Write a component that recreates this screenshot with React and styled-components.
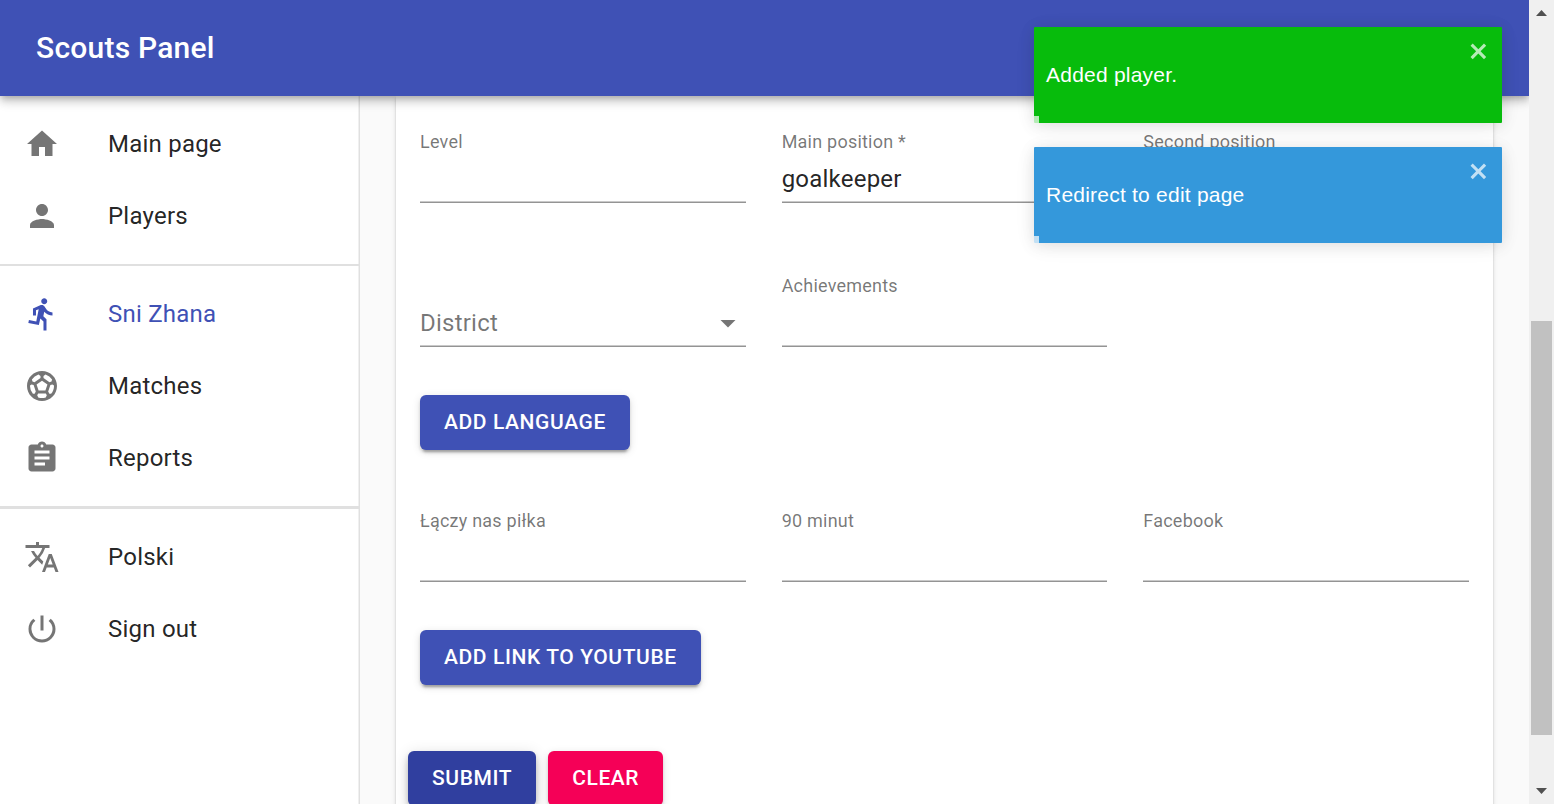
import React from "react";
import styled, { createGlobalStyle, css } from "styled-components";
import {
  MdHome,
  MdPerson,
  MdDirectionsRun,
  MdSportsSoccer,
  MdAssignment,
  MdTranslate,
  MdPowerSettingsNew,
  MdArrowDropDown,
} from "react-icons/md";

const GlobalStyle = createGlobalStyle`
  *, *::before, *::after { box-sizing: border-box; }
  body {
    margin: 0;
    background: #fafafa;
    color: rgba(0, 0, 0, 0.87);
    font-family: Roboto, "Liberation Sans", sans-serif;
    font-size: 24px;
    letter-spacing: 0.00938em;
  }
`;

const Window = styled.div`
  display: flex;
  height: 100vh;
  overflow: hidden;
`;

const Page = styled.div`
  position: relative;
  flex: 1;
  min-width: 0;
  display: flex;
  flex-direction: column;
  overflow: hidden;
`;

const AppBar = styled.header`
  position: relative;
  z-index: 2;
  flex: none;
  display: flex;
  align-items: center;
  height: 96px;
  padding: 0 36px;
  background: #3f51b5;
  color: #fff;
  box-shadow: 0 3px 6px -2px rgba(0, 0, 0, 0.2), 0 6px 8px 0 rgba(0, 0, 0, 0.14),
    0 2px 15px 0 rgba(0, 0, 0, 0.12);
`;

const Title = styled.h1`
  margin: 0;
  font-size: 30px;
  line-height: 48px;
  font-weight: 500;
  letter-spacing: 0.0075em;
`;

const Body = styled.div`
  flex: 1;
  min-height: 0;
  display: flex;
`;

const Drawer = styled.nav`
  flex: none;
  width: 360px;
  background: #fff;
  border-right: 1px solid #e0e0e0;
  box-shadow: inset -1px 0 #f0f0f0;
`;

const NavList = styled.ul`
  list-style: none;
  margin: 0;
  padding: 12px 0;
  ${(p) => p.$divider && css`border-bottom: ${p.$divider}px solid #e0e0e0;`}
`;

const NavLink = styled.a`
  display: flex;
  align-items: center;
  gap: 48px;
  height: 72px;
  padding: 0 24px;
  color: ${(p) => (p.$active ? "#3f51b5" : "inherit")};
  line-height: 36px;
  text-decoration: none;

  svg {
    flex: none;
    width: 36px;
    height: 36px;
    color: ${(p) => (p.$active ? "#3f51b5" : "rgba(0, 0, 0, 0.54)")};
  }
`;

const Content = styled.main`
  flex: 1;
  min-width: 0;
  padding: 0 36px;
  overflow: hidden;
`;

const Card = styled.form`
  min-height: 100%;
  padding: 35px 12px 24px;
  background: #fff;
  box-shadow: 0 3px 2px -2px rgba(0, 0, 0, 0.2), 0 2px 2px 0 rgba(0, 0, 0, 0.14),
    0 2px 5px 0 rgba(0, 0, 0, 0.12);
`;

const FieldGrid = styled.div`
  display: grid;
  grid-template-columns: repeat(3, 1fr);
  gap: 72px 36px;
  padding: 0 12px;
`;

const FieldBox = styled.div`
  display: flex;
  flex-direction: column;
  justify-content: flex-end;
  min-width: 0;
  height: 72px;
`;

const Label = styled.label`
  margin: 2px 0 4px;
  color: rgba(0, 0, 0, 0.54);
  font-size: 18px;
  line-height: 18px;
  white-space: nowrap;
`;

const control = css`
  display: block;
  width: 100%;
  height: 48px;
  margin: 0;
  padding: 10px 0 8px;
  border: 0;
  border-bottom: 1px solid #949494;
  border-radius: 0;
  box-shadow: inset 0 -1px #c9c9c9;
  background: transparent;
  color: inherit;
  font: inherit;
  line-height: 29px;
  letter-spacing: inherit;
  outline: 0;
`;

const TextInput = styled.input`
  ${control}
`;

const SelectWrap = styled.div`
  position: relative;

  svg {
    position: absolute;
    right: 0;
    top: 6px;
    width: 36px;
    height: 36px;
    color: rgba(0, 0, 0, 0.54);
    pointer-events: none;
  }
`;

const SelectInput = styled.select`
  ${control}
  appearance: none;
  color: ${(p) => (p.$empty ? "rgba(0, 0, 0, 0.54)" : "inherit")};
`;

const AddRow = styled.div`
  padding: ${(p) => p.$space};
`;

const Actions = styled.div`
  display: flex;
  gap: 12px;
`;

const tones = {
  primary: "#3f51b5",
  pressed: "#303f9f",
  secondary: "#f50057",
};

const Button = styled.button`
  height: 55px;
  padding: 0 24px;
  border: 0;
  border-radius: 6px;
  background: ${(p) => tones[p.$tone || "primary"]};
  color: #fff;
  font-family: inherit;
  font-size: 21px;
  font-weight: 500;
  line-height: 37px;
  letter-spacing: 0.02857em;
  text-transform: uppercase;
  box-shadow: ${(p) =>
    p.$tone === "pressed"
      ? "0 3px 6px -2px rgba(0,0,0,.2), 0 6px 8px 0 rgba(0,0,0,.14), 0 2px 15px 0 rgba(0,0,0,.12)"
      : "0 5px 2px -3px rgba(0,0,0,.2), 0 3px 3px 0 rgba(0,0,0,.14), 0 2px 8px 0 rgba(0,0,0,.12)"};
`;

const Toasts = styled.div`
  position: absolute;
  z-index: 3;
  top: 27px;
  right: 27px;
  width: 468px;
  display: flex;
  flex-direction: column;
  gap: 24px;
`;

const ToastBox = styled.div`
  position: relative;
  display: flex;
  align-items: center;
  min-height: 96px;
  padding: 12px;
  border-radius: 1px;
  background: ${(p) => p.$color};
  color: #fff;
  font-family: "Liberation Sans", Arial, sans-serif;
  font-size: 21px;
  line-height: 24px;
  box-shadow: 0 2px 15px 0 rgba(0, 0, 0, 0.1), 0 3px 23px 0 rgba(0, 0, 0, 0.05);

  &::after {
    content: "";
    position: absolute;
    left: 0;
    bottom: 0;
    width: 5px;
    height: 7px;
    background: rgba(255, 255, 255, 0.7);
  }
`;

const ToastText = styled.div`
  flex: 1;
`;

const CloseButton = styled.button`
  align-self: flex-start;
  display: flex;
  padding: 0;
  border: 0;
  background: transparent;
  color: #fff;
  opacity: 0.7;
`;

const ScrollTrack = styled.div`
  flex: none;
  display: flex;
  flex-direction: column;
  width: 25px;
  padding: 0 2px;
  background: #f0f0f0;
`;

const ScrollArrow = styled.div`
  display: flex;
  align-items: center;
  justify-content: center;
  height: 26px;
`;

const ScrollSpace = styled.div`
  flex: ${(p) => p.$share} 0 0;
`;

const ScrollThumb = styled(ScrollSpace)`
  background: #c1c1c1;
`;

const navGroups = [
  {
    divider: 2,
    items: [
      { icon: MdHome, text: "Main page" },
      { icon: MdPerson, text: "Players" },
    ],
  },
  {
    divider: 3,
    items: [
      { icon: MdDirectionsRun, text: "Sni Zhana", active: true },
      { icon: MdSportsSoccer, text: "Matches" },
      { icon: MdAssignment, text: "Reports" },
    ],
  },
  {
    items: [
      { icon: MdTranslate, text: "Polski" },
      { icon: MdPowerSettingsNew, text: "Sign out" },
    ],
  },
];

function TextField({ id, label }) {
  return (
    <FieldBox>
      <Label htmlFor={id}>{label}</Label>
      <TextInput id={id} type="text" />
    </FieldBox>
  );
}

function SelectField({ id, label, value, placeholder }) {
  return (
    <FieldBox>
      {label && <Label htmlFor={id}>{label}</Label>}
      <SelectWrap>
        <SelectInput id={id} aria-label={label ? undefined : placeholder} $empty={!value}>
          <option>{value || placeholder}</option>
        </SelectInput>
        <MdArrowDropDown aria-hidden="true" />
      </SelectWrap>
    </FieldBox>
  );
}

function Toast({ color, children }) {
  return (
    <ToastBox $color={color} role="alert">
      <ToastText>{children}</ToastText>
      <CloseButton type="button" aria-label="close">
        <svg width="21" height="24" viewBox="0 0 14 16" fill="currentColor" aria-hidden="true">
          <path
            fillRule="evenodd"
            d="M7.71 8.23l3.75 3.75-1.48 1.48-3.75-3.75-3.75 3.75L1 11.98l3.75-3.75L1 4.48 2.48 3l3.75 3.75L9.98 3l1.48 1.48-3.75 3.75z"
          />
        </svg>
      </CloseButton>
    </ToastBox>
  );
}

export default function App() {
  return (
    <Window>
      <GlobalStyle />
      <Page>
        <AppBar>
          <Title>Scouts Panel</Title>
        </AppBar>
        <Body>
          <Drawer>
            {navGroups.map((group, i) => (
              <NavList key={i} $divider={group.divider}>
                {group.items.map(({ icon: Icon, text, active }) => (
                  <li key={text}>
                    <NavLink href="#" $active={active}>
                      <Icon aria-hidden="true" />
                      {text}
                    </NavLink>
                  </li>
                ))}
              </NavList>
            ))}
          </Drawer>
          <Content>
            <Card>
              <FieldGrid>
                <TextField id="level" label="Level" />
                <SelectField id="position" label="Main position *" value="goalkeeper" />
                <SelectField id="second" label="Second position" placeholder="" />
                <SelectField id="district" placeholder="District" />
                <TextField id="achievements" label="Achievements" />
              </FieldGrid>
              <AddRow $space="48px 12px 60px">
                <Button type="button">Add language</Button>
              </AddRow>
              <FieldGrid>
                <TextField id="lnp" label="Łączy nas piłka" />
                <TextField id="minut" label="90 minut" />
                <TextField id="facebook" label="Facebook" />
              </FieldGrid>
              <AddRow $space="48px 12px 66px">
                <Button type="button">Add link to Youtube</Button>
              </AddRow>
              <Actions>
                <Button type="submit" $tone="pressed">Submit</Button>
                <Button type="reset" $tone="secondary">Clear</Button>
              </Actions>
            </Card>
          </Content>
        </Body>
        <Toasts>
          <Toast color="#07bc0c">Added player.</Toast>
          <Toast color="#3498db">Redirect to edit page</Toast>
        </Toasts>
      </Page>
      <ScrollTrack aria-hidden="true">
        <ScrollArrow>
          <svg width="11" height="6" viewBox="0 0 11 6" fill="#505050">
            <path d="M0 6L5.5 0L11 6z" />
          </svg>
        </ScrollArrow>
        <ScrollSpace $share={295} />
        <ScrollThumb $share={414} />
        <ScrollSpace $share={43} />
        <ScrollArrow>
          <svg width="11" height="6" viewBox="0 0 11 6" fill="#505050">
            <path d="M0 0L5.5 6L11 0z" />
          </svg>
        </ScrollArrow>
      </ScrollTrack>
    </Window>
  );
}
